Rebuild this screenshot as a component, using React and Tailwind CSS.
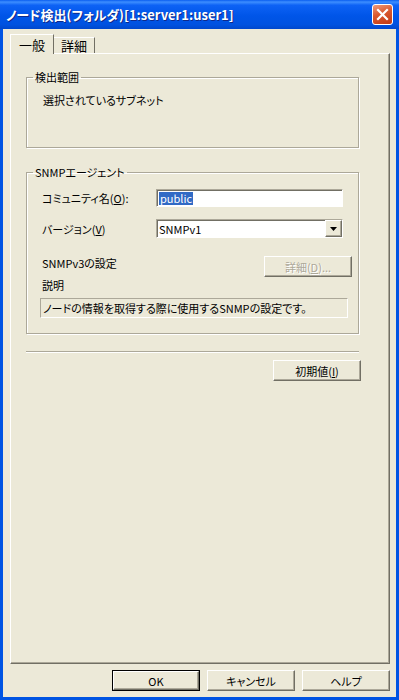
import React from 'react';

const bevel =
  'border border-t-white border-l-white border-r-[#716F64] border-b-[#716F64] shadow-[inset_-1px_-1px_0_#ACA899] bg-[#ECE9D8]';

function Btn({ children, disabled, isDefault, className = '' }) {
  const inner = (
    <div className={`flex h-full w-full items-center justify-center ${bevel}`}>
      <span className={disabled ? 'text-[#ACA899] [text-shadow:1px_1px_0_#fff]' : 'text-black'}>{children}</span>
    </div>
  );
  if (isDefault) {
    return <div className={`h-[21px] w-[88px] border border-black ${className}`}>{inner}</div>;
  }
  return <div className={`h-[21px] w-[88px] ${className}`}>{inner}</div>;
}

function Group({ title, className = '', children }) {
  return (
    <fieldset
      className={`ml-[15px] w-[333px] border border-[#ACA899] px-[6px] shadow-[inset_1px_1px_0_#fff,1px_1px_0_#fff] ${className}`}
    >
      <legend className="px-[2px] leading-[16px]">{title}</legend>
      {children}
    </fieldset>
  );
}

const sunken =
  'border border-t-[#ACA899] border-l-[#ACA899] border-r-white border-b-white shadow-[inset_1px_1px_0_#716F64] bg-white';

export default function App() {
  return (
    <div
      className="flex h-[700px] w-[399px] flex-col bg-[#ECE9D8] text-[11px] leading-[16px] text-black [font-feature-settings:'palt']"
      style={{ fontFamily: '"Noto Sans CJK JP", "Liberation Sans", sans-serif' }}
    >
      {/* title bar */}
      <div className="flex h-[29px] shrink-0 items-center justify-between bg-[linear-gradient(180deg,#0A5EF0_0%,#3D8EFF_7%,#0D62F5_18%,#0055E8_55%,#0052E0_85%,#0047CC_100%)] pl-[6px] pr-[6px]">
        <span className="text-[13px] font-bold text-white [text-shadow:1px_1px_0_#0F2A8A]">
          ノード検出(フォルダ)[1:server1:user1]
        </span>
        <div className="flex h-[21px] w-[21px] items-center justify-center rounded-[3px] border border-white bg-[linear-gradient(160deg,#EE9B7C_0%,#D9582F_45%,#C23A14_100%)]">
          <svg width="13" height="13" viewBox="0 0 13 13">
            <path d="M2 2 L11 11 M11 2 L2 11" stroke="#fff" strokeWidth="2.2" strokeLinecap="square" />
          </svg>
        </div>
      </div>

      {/* body */}
      <div className="flex flex-1 flex-col border-x-[3px] border-b-[3px] border-[#0054E3] pl-[7px] pr-[6px] pt-[5px]">
        {/* tabs */}
        <div className="flex h-[19px] items-end">
          <div className="relative z-10 -mb-px flex h-[20px] w-[44px] items-start justify-center border-l border-t border-r border-l-white border-t-white border-r-[#716F64] bg-[#ECE9D8] pt-[2px] text-[13px]">
            一般
          </div>
          <div className="flex h-[16px] w-[41px] items-start justify-center border-t border-r border-t-white border-r-[#716F64] text-[13px]">
            詳細
          </div>
        </div>

        {/* tab page */}
        <div className="h-[611px] border border-l-white border-t-white border-r-[#716F64] border-b-[#716F64] shadow-[inset_-1px_-1px_0_#ACA899]">
          <Group title="検出範囲" className="mt-[15px] h-[79px]">
            <div className="ml-[10px] mt-[7px]">選択されているサブネット</div>
          </Group>

          <Group title="SNMPエージェント" className="mt-[16px] h-[170px]">
            <div className="ml-[9px] mt-[9px] flex h-[18px] items-center">
              <span className="w-[114px]">
                コミュニティ名(<span className="underline">O</span>):
              </span>
              <div className={`flex h-[18px] w-[187px] items-center pl-[2px] ${sunken}`}>
                <span className="bg-[#316AC5] px-[1px] leading-[13px] text-white">public</span>
              </div>
            </div>

            <div className="ml-[9px] mt-[12px] flex h-[19px] items-center">
              <span className="w-[114px]">
                バージョン(<span className="underline">V</span>)
              </span>
              <div className={`flex h-[19px] w-[187px] items-center justify-between pl-[2px] ${sunken}`}>
                <span>SNMPv1</span>
                <div className={`flex h-[17px] w-[17px] items-center justify-center ${bevel}`}>
                  <svg width="7" height="4" viewBox="0 0 7 4">
                    <path d="M0 0 H7 L3.5 4 Z" fill="#000" />
                  </svg>
                </div>
              </div>
            </div>

            <div className="ml-[9px] mt-[18px] flex items-start justify-between">
              <span className="-mt-[1px]">SNMPv3の設定</span>
              <Btn disabled>
                詳細(<span className="underline">D</span>)...
              </Btn>
            </div>

            <div className="ml-[9px]">説明</div>
            <div className="ml-[7px] mt-[5px] flex h-[20px] w-[308px] items-center border border-t-[#ACA899] border-l-[#ACA899] border-r-white border-b-white pl-[2px]">
              ノードの情報を取得する際に使用するSNMPの設定です。
            </div>
          </Group>

          <div className="ml-[15px] mt-[17px] h-[2px] w-[333px] border-t border-b border-t-[#ACA899] border-b-white" />

          <Btn className="ml-[262px] mt-[7px]">
            初期値(<span className="underline">I</span>)
          </Btn>
        </div>

        {/* bottom buttons */}
        <div className="mt-[6px] flex justify-end gap-[7px]">
          <Btn isDefault>OK</Btn>
          <Btn>キャンセル</Btn>
          <Btn>ヘルプ</Btn>
        </div>
      </div>
    </div>
  );
}
